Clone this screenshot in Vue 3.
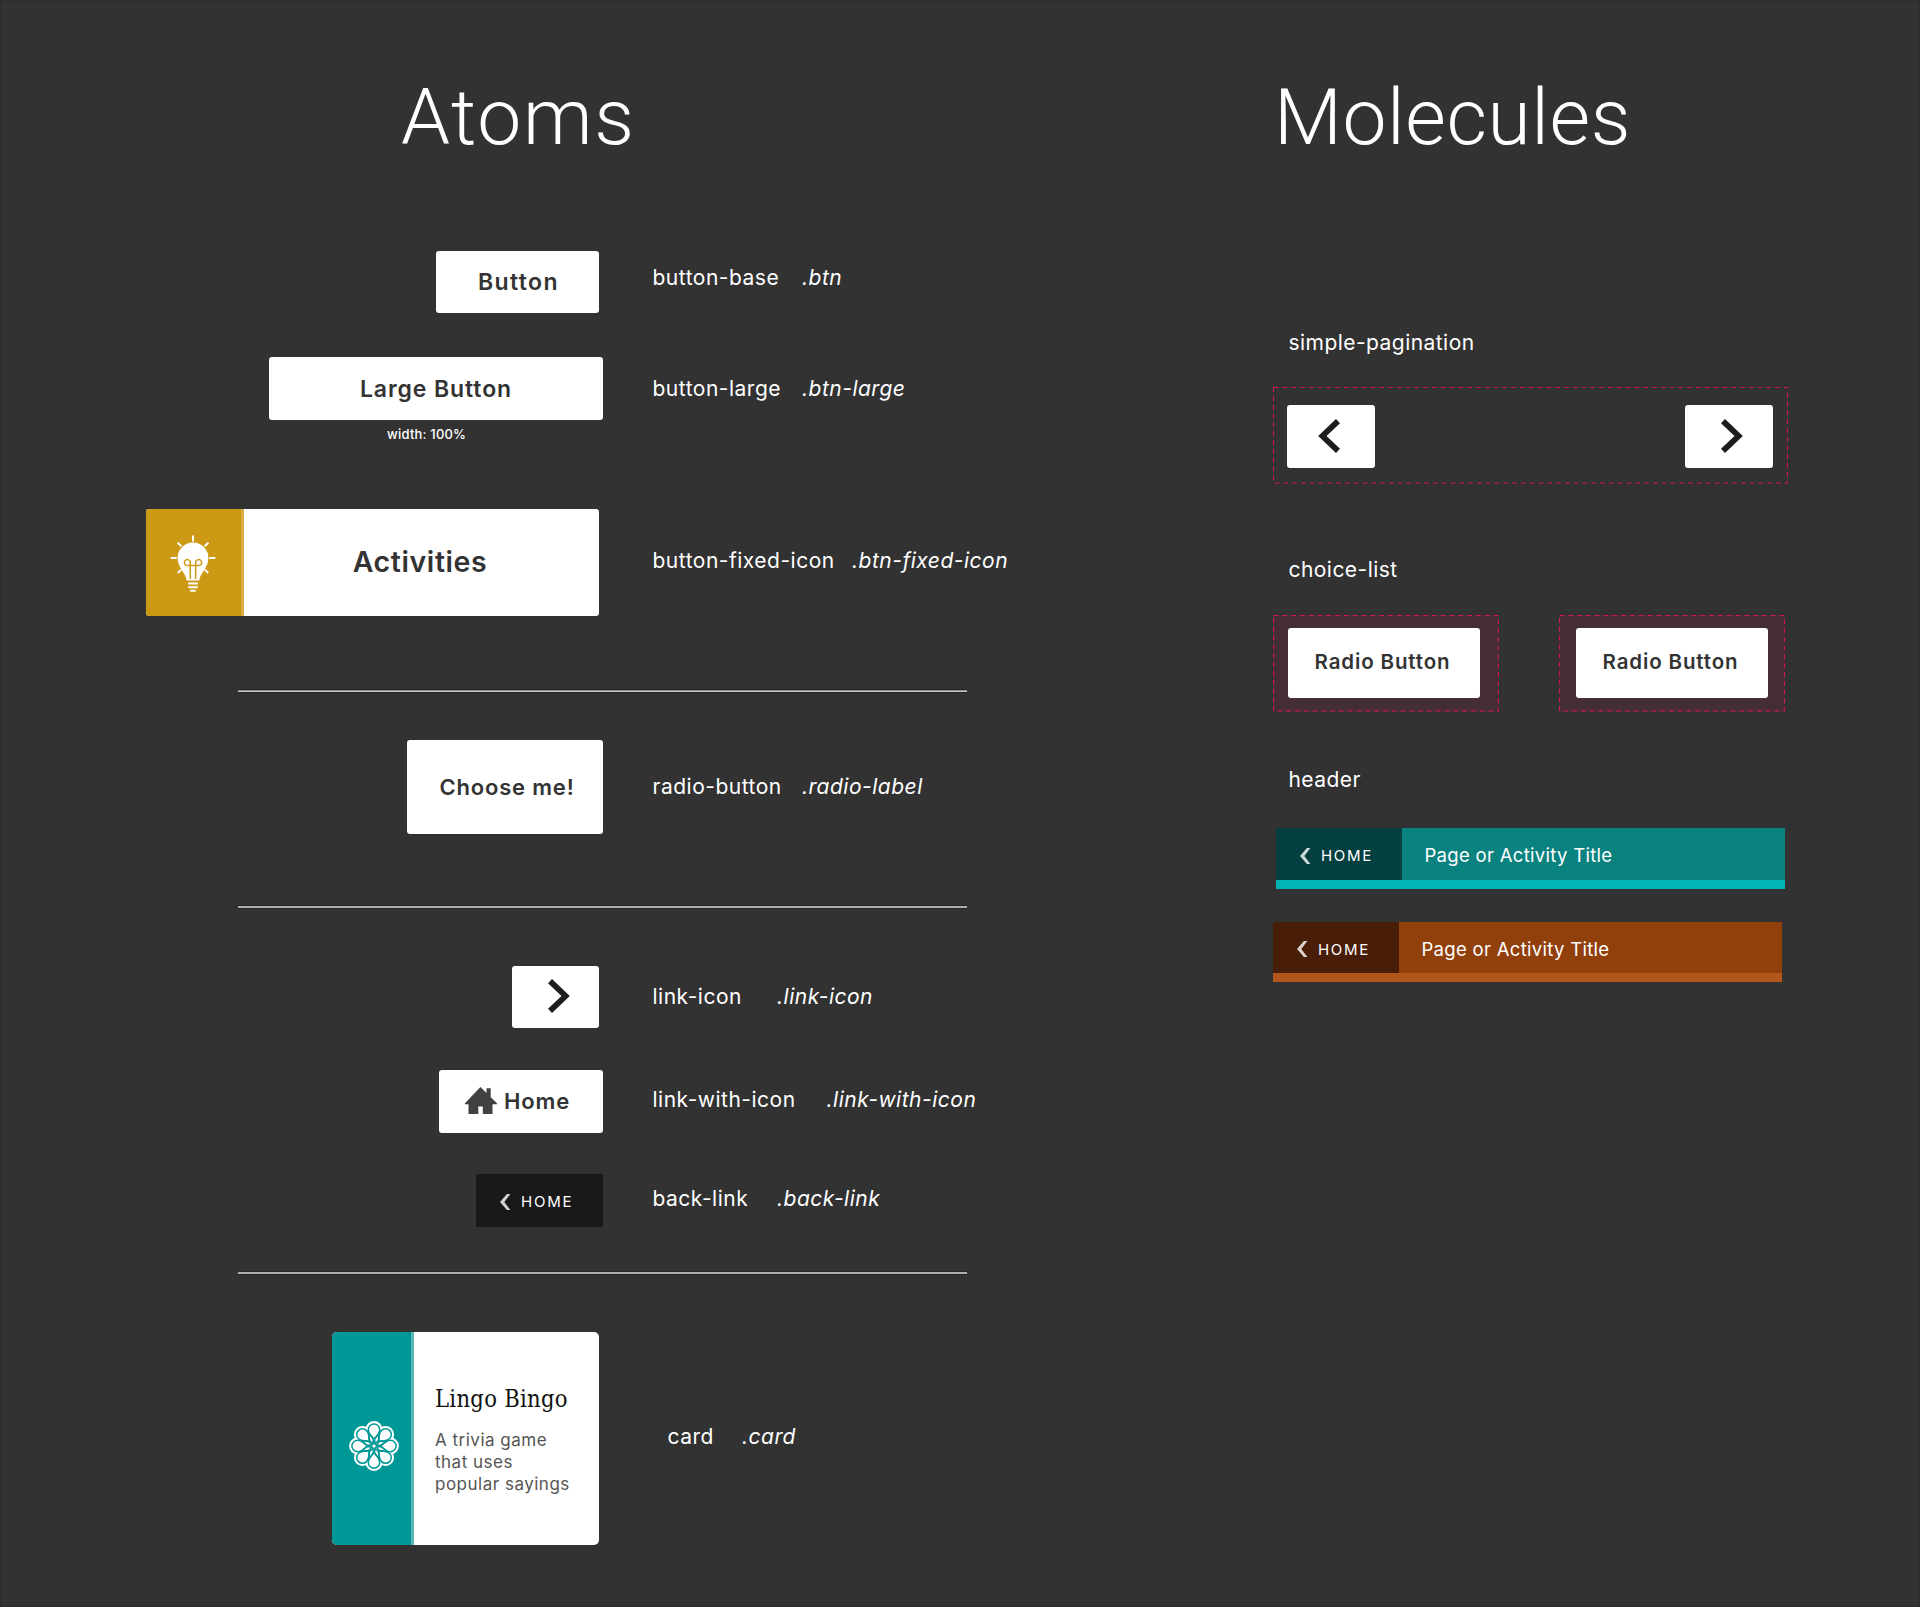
<script setup>
const headers = [
  { tone: 'teal', title: 'Page or Activity Title' },
  { tone: 'rust', title: 'Page or Activity Title' },
]
const petals = [0, 45, 90, 135, 180, 225, 270, 315]
</script>

<template>
  <main class="page">
    <section class="atoms">
      <h1 class="title title-atoms">Atoms</h1>

      <div class="row row-base">
        <div class="preview"><button class="btn btn-base">Button</button></div>
        <p class="label"><span class="name">button-base</span><em>.btn</em></p>
      </div>

      <div class="row row-large">
        <div class="preview wide"><button class="btn btn-large">Large Button</button></div>
        <p class="label"><span class="name">button-large</span><em>.btn-large</em></p>
      </div>
      <p class="caption">width: 100%</p>

      <div class="row row-fixed">
        <div class="preview">
          <button class="btn btn-fixed-icon">
            <span class="bulb">
              <svg width="48" height="60" viewBox="-24 -24 48 60">
                <g stroke="#fff" stroke-width="2" fill="none">
                  <path d="M0-22.5v6M-22.3 0h6M16.3 0h6M-15.4-15.4l3.7 3.7M15.4-15.4l-3.7 3.7M-15.2 15l3.4-3.4M15.2 15l-3.4-3.4" />
                </g>
                <path fill="#fff" d="M-6.3 22.5C-6.6 15.5-15.4 10-15.4 0a15.4 15.4 0 0 1 30.8 0C15.4 10 6.6 15.5 6.3 22.5z" />
                <path fill="none" stroke="#cb9914" stroke-width="1.5" d="M-2.7 21V5.2a3 3 0 1 0-2.9 2.4H5.6A3 3 0 1 0 2.7 5.2V21" />
                <path stroke="#fff" stroke-width="2" d="M-4.8 25.5h9.6M-4.8 29.2h9.6M-2.8 32.8h5.6" />
              </svg>
            </span>
            <span class="fixed-text">Activities</span>
          </button>
        </div>
        <p class="label"><span class="name fixed-name">button-fixed-icon</span><em>.btn-fixed-icon</em></p>
      </div>

      <hr class="rule rule-one" />

      <div class="row row-radio">
        <div class="preview wide"><button class="btn radio-label">Choose me!</button></div>
        <p class="label"><span class="name">radio-button</span><em>.radio-label</em></p>
      </div>

      <hr class="rule rule-two" />

      <div class="row row-link">
        <div class="preview">
          <a class="btn link-icon">
            <svg width="24" height="36" viewBox="0 0 24 36"><path d="M3 3.2L18.6 18 3 32.8" fill="none" stroke="#1c1c1c" stroke-width="5.8" /></svg>
          </a>
        </div>
        <p class="label"><span class="name link-name">link-icon</span><em>.link-icon</em></p>
      </div>

      <div class="row row-with">
        <div class="preview wide">
          <a class="btn link-with-icon">
            <svg width="32" height="28" viewBox="0 0 32 28"><path fill="#414141" d="M15.4 0L21.5 6V1.2h4.2v9L32 16.2v1H27.5V27H17.8v-7.5h-4.5V27H3.5v-9.8H0v-1z" /></svg>
            <span>Home</span>
          </a>
        </div>
        <p class="label"><span class="name with-name">link-with-icon</span><em>.link-with-icon</em></p>
      </div>

      <div class="row row-back">
        <div class="preview wide">
          <a class="back-link">
            <svg width="11" height="16" viewBox="0 0 11 16"><path fill="#d0d0d0" d="M10.4 0H6.9L0 8l6.9 8h3.5L4.3 8z" /></svg>
            <span>HOME</span>
          </a>
        </div>
        <p class="label"><span class="name link-name">back-link</span><em>.back-link</em></p>
      </div>

      <hr class="rule rule-three" />

      <div class="row row-card">
        <div class="preview">
          <article class="card">
            <div class="card-side">
              <svg width="52" height="52" viewBox="-26 -26 52 52">
                <circle r="18" fill="#fff" />
                <circle v-for="a in petals" :key="'o' + a" cy="-16.4" r="8.5" fill="#fff" :transform="`rotate(${a})`" />
                <g fill="none" stroke="#009896" stroke-width="1.5" stroke-linejoin="round">
                  <g v-for="a in petals" :key="'p' + a" :transform="`rotate(${a})`">
                    <path d="M-5.7-16.4a5.7 5.7 0 0 1 11.4 0C5.8-12.5 3.5-10 0-6.2C-3.5-10-5.8-12.5-5.7-16.4z" />
                    <path transform="rotate(22.5)" d="M0-2.5L2.4-7 0-14.5-2.4-7z" />
                  </g>
                </g>
                <circle r="2.2" fill="#fff" stroke="#009896" stroke-width="1.2" />
              </svg>
            </div>
            <div class="card-body">
              <h2>Lingo Bingo</h2>
              <p>A trivia game<br />that uses<br />popular sayings</p>
            </div>
          </article>
        </div>
        <p class="label card-label"><span class="name card-name">card</span><em>.card</em></p>
      </div>
    </section>

    <section class="molecules">
      <h1 class="title title-molecules">Molecules</h1>

      <h3 class="mol-label label-pagination">simple-pagination</h3>
      <nav class="pagination">
        <svg class="outline" width="515" height="97"><rect x="0.5" y="0.5" width="514" height="95.5" /></svg>
        <a class="btn page-link prev">
          <svg width="24" height="36" viewBox="0 0 24 36"><path d="M21 3.2L5.4 18 21 32.8" fill="none" stroke="#1c1c1c" stroke-width="5.8" /></svg>
        </a>
        <a class="btn page-link next">
          <svg width="24" height="36" viewBox="0 0 24 36"><path d="M3 3.2L18.6 18 3 32.8" fill="none" stroke="#1c1c1c" stroke-width="5.8" /></svg>
        </a>
      </nav>

      <h3 class="mol-label label-choice">choice-list</h3>
      <div class="choices">
        <div class="choice">
          <svg class="outline" width="226" height="97"><rect x="0.5" y="0.5" width="225" height="95.5" /></svg>
          <button class="btn choice-btn">Radio Button</button>
        </div>
        <div class="choice second">
          <svg class="outline" width="226" height="97"><rect x="0.5" y="0.5" width="225" height="95.5" /></svg>
          <button class="btn choice-btn">Radio Button</button>
        </div>
      </div>

      <h3 class="mol-label label-header">header</h3>
      <header v-for="h in headers" :key="h.tone" class="bar" :class="h.tone">
        <a class="bar-back">
          <svg width="11" height="16" viewBox="0 0 11 16"><path fill="#fff" fill-opacity="0.8" d="M10.4 0H6.9L0 8l6.9 8h3.5L4.3 8z" /></svg>
          <span>HOME</span>
        </a>
        <span class="bar-title">{{ h.title }}</span>
      </header>
    </section>
  </main>
</template>

<style>
body {
  margin: 0;
  background: #323232;
}
</style>

<style scoped>
.page {
  display: flex;
  width: 1920px;
  height: 1607px;
  box-sizing: border-box;
  padding-top: 72px;
  border: 1px solid #2c2c2c;
  background: #323232;
  color: #fff;
  font-family: Inter, "Liberation Sans", sans-serif;
  white-space: nowrap;
  overflow: hidden;
}
.atoms {
  width: 1272px;
  margin: -1px 0 0 -1px;
  flex: none;
}
.molecules {
  width: 515px;
  margin: -1px 0 0 1px;
  flex: none;
}
h1, h2, h3, p, hr {
  margin: 0;
}
.title {
  height: 90px;
  line-height: 91px;
  font-family: Roboto, sans-serif;
  font-weight: 340;
  font-size: 78.5px;
}
.title-atoms {
  padding-left: 401px;
  letter-spacing: 1.7px;
}
.title-molecules {
  padding-left: 1px;
  letter-spacing: 0.6px;
}

.row {
  display: flex;
}
.preview {
  display: flex;
  justify-content: flex-end;
  flex: none;
  box-sizing: border-box;
  width: 652.5px;
  padding-right: 53.5px;
}
.preview.wide {
  padding-right: 49.5px;
}
.btn {
  display: flex;
  align-items: center;
  justify-content: center;
  box-sizing: border-box;
  border: 0;
  padding: 0;
  border-radius: 3px;
  background: #fff;
  color: #333;
  font-family: inherit;
  font-weight: 600;
  font-size: 23px;
  letter-spacing: 0.9px;
}
.label {
  display: flex;
  align-items: center;
  font-size: 21px;
  letter-spacing: 0.5px;
}
.name {
  width: 149.5px;
}
.fixed-name { width: 199.5px; }
.link-name { width: 124.5px; }
.with-name { width: 174px; }
.card-name { width: 74.5px; }
.label em {
  font-style: italic;
}

.row-base { margin-top: 89px; height: 62px; }
.btn-base { width: 163px; letter-spacing: 1.4px; padding-left: 2px; }
.row-base .label { padding-bottom: 9px; }

.row-large { margin-top: 44px; height: 63px; }
.btn-large { width: 334px; }
.row-large .label { padding-bottom: 1px; }
.caption {
  height: 16px;
  margin: 6px 0 0 387px;
  line-height: 17px;
  font-size: 13px;
  font-weight: 500;
  letter-spacing: 0.2px;
}

.row-fixed { margin-top: 67px; height: 107px; }
.btn-fixed-icon {
  align-items: stretch;
  justify-content: flex-start;
  width: 453px;
  overflow: hidden;
  font-size: 28.5px;
  letter-spacing: 0.6px;
}
.bulb {
  display: flex;
  align-items: center;
  box-sizing: border-box;
  width: 98px;
  padding: 0 0 0 23px;
  border-right: 3px solid #d8ad42;
  background: #cb9914;
}
.bulb svg { margin-top: 2px; }
.fixed-text {
  flex: 1;
  padding: 0 3px 2px 0;
  display: flex;
  align-items: center;
  justify-content: center;
}
.row-fixed .label { padding-bottom: 4px; }

.rule {
  width: 729px;
  height: 2px;
  margin-left: 238px;
  border: 0;
  background: #adadad;
  box-shadow: 0 1px #262626, 0 -1px #262626;
}
.rule-one { margin-top: 74px; background: linear-gradient(#8f8f8f 50%, #c8c8c8 50%); }
.rule-two { margin-top: 72px; }
.rule-three { margin-top: 45px; }

.row-radio { margin-top: 48px; height: 94px; }
.radio-label { width: 196px; font-size: 22px; letter-spacing: 0.8px; padding: 0 0 1px 4px; }
.row-radio .label { padding-bottom: 1px; }

.row-link { margin-top: 58px; height: 62px; }
.link-icon { width: 87px; justify-content: flex-start; padding: 0 0 2px 35px; }
.row-link .label { padding-bottom: 2px; }

.row-with { margin-top: 42px; height: 63px; }
.link-with-icon {
  width: 164px;
  justify-content: flex-start;
  gap: 7px;
  padding: 0 0 1px 26px;
  font-size: 22px;
}
.row-with .label { padding-bottom: 5px; }

.row-back { margin-top: 41px; height: 53px; }
.back-link {
  display: flex;
  align-items: center;
  box-sizing: border-box;
  width: 127px;
  padding: 2px 0 0 24px;
  gap: 10px;
  background: #191919;
  font-size: 15px;
  letter-spacing: 1.8px;
}
.row-back .label { padding-bottom: 5px; }

.row-card { margin-top: 58px; height: 213px; }
.card {
  display: flex;
  width: 267px;
  border-radius: 5px;
  overflow: hidden;
  background: #fff;
}
.card-side {
  display: flex;
  align-items: center;
  box-sizing: border-box;
  width: 82px;
  padding: 15px 0 0 16px;
  border-right: 3px solid #5ab9b7;
  background: #009896;
}
.card-body {
  padding: 51px 0 0 21px;
}
.card-body h2 {
  height: 32px;
  line-height: 32px;
  color: #111;
  font-family: "DejaVu Serif Condensed", "DejaVu Serif", serif;
  font-stretch: condensed;
  font-weight: 400;
  font-size: 23.5px;
  letter-spacing: 0.3px;
}
.card-body p {
  margin-top: 14px;
  color: #555;
  font-size: 17px;
  line-height: 22.2px;
  letter-spacing: 0.5px;
}
.card-label { padding: 0 0 4px 15px; }

.mol-label {
  height: 24px;
  padding-left: 15.5px;
  line-height: 25px;
  font-weight: 400;
  font-size: 21px;
  letter-spacing: 0.45px;
}
.label-pagination { margin-top: 168px; }
.label-choice { margin-top: 73px; }
.label-header { margin-top: 55px; }
.outline {
  position: absolute;
  inset: 0;
}
.outline rect {
  fill: none;
  stroke: #d4145a;
  stroke-width: 1.2;
  stroke-dasharray: 4.9 3.9;
}
.pagination {
  position: relative;
  display: flex;
  justify-content: space-between;
  box-sizing: border-box;
  height: 97px;
  margin-top: 33px;
  padding: 18px 15px 16px 14px;
}
.page-link {
  width: 88px;
  padding-bottom: 1px;
  justify-content: flex-start;
}
.prev { padding-left: 30px; }
.next { padding-left: 35px; }

.choices {
  display: flex;
  gap: 60px;
  margin-top: 34px;
}
.choice {
  position: relative;
  box-sizing: border-box;
  width: 226px;
  height: 97px;
  padding: 13px 0 0 15px;
  flex: none;
  background: #452d35;
}
.choice.second { padding-left: 17px; }
.choice-btn {
  position: relative;
  width: 192px;
  height: 70px;
  padding: 0 3px 3px 0;
  font-size: 20.5px;
  letter-spacing: 0.85px;
}

.bar {
  display: flex;
  box-sizing: border-box;
  width: 509px;
  height: 61px;
  border-bottom: 9px solid;
}
.bar.teal {
  margin: 37px 0 0 3px;
  border-color: #00b5b3;
  background: #0a8380;
}
.bar.rust {
  margin-top: 33px;
  height: 60px;
  border-color: #b1571c;
  background: #91400c;
}
.bar-back {
  display: flex;
  align-items: center;
  gap: 10px;
  box-sizing: border-box;
  width: 126px;
  padding: 3px 0 0 24px;
  font-size: 15px;
  letter-spacing: 1.7px;
}
.teal .bar-back { background: #04403f; }
.rust .bar-back { background: #481e08; }
.bar-title {
  display: flex;
  align-items: center;
  padding: 2px 0 0 22.5px;
  font-size: 18.5px;
  letter-spacing: 0.3px;
}
</style>
